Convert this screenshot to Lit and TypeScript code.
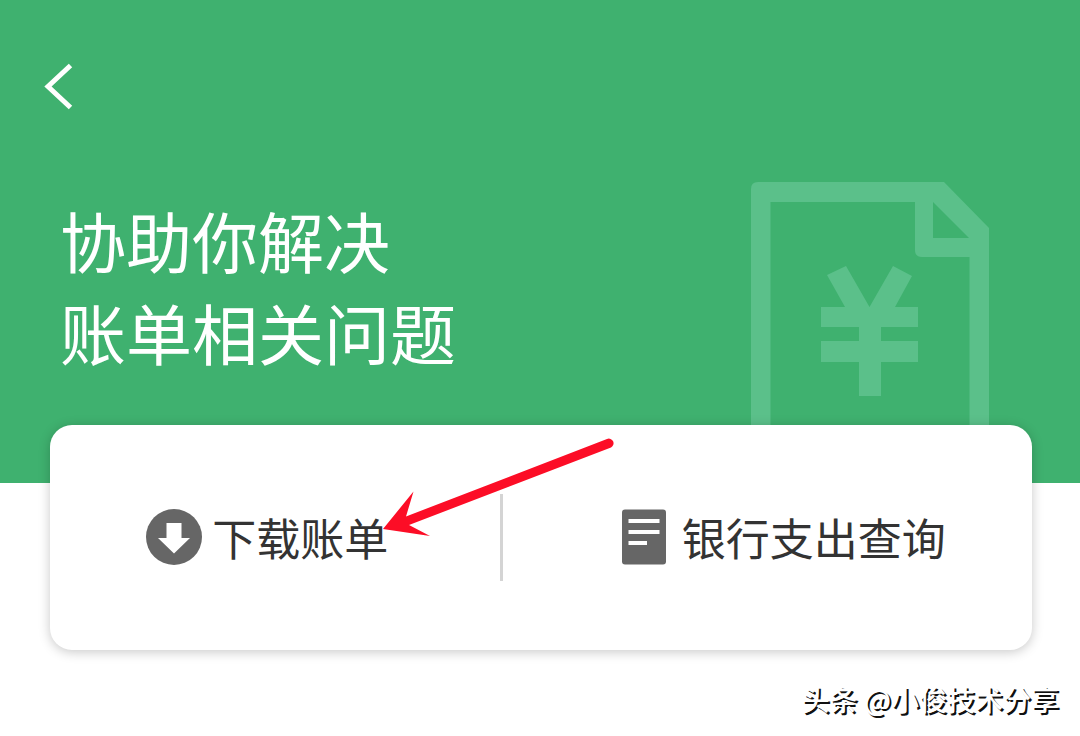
import { LitElement, html, css, svg } from "lit";
import { customElement } from "lit/decorators.js";

const downloadIcon = svg`
  <svg width="56" height="56" viewBox="0 0 56 56" aria-hidden="true">
    <circle cx="28" cy="28" r="28" fill="#666" />
    <path d="M20.500 14h15v15h8.500L28 44.500 12 29h8.500z" fill="#fff" />
  </svg>`;

const statementIcon = svg`
  <svg width="44" height="56" viewBox="0 0 44 56" aria-hidden="true">
    <rect width="44" height="55" y="0.500" rx="3" fill="#666" />
    <path d="M6.500 12h31M6.500 23h31M6.500 34h18.500" stroke="#fff" stroke-width="4" />
  </svg>`;

@customElement("app-root")
export class AppRoot extends LitElement {
  static styles = css`
    :host {
      display: block;
      position: relative;
      min-height: 100vh;
      background: #fff;
      color: #333;
      font-family: "Noto Sans CJK SC", sans-serif;
    }
    .hero {
      background: #3fb16f;
      color: #fff;
      padding: 62px 91px 0 60px;
    }
    .back {
      display: block;
      margin: 0 0 0 -18px;
      padding: 0;
      border: 0;
      background: none;
      color: inherit;
      height: 48px;
      width: 32px;
    }
    .back svg,
    .art,
    .action svg {
      display: block;
      flex: none;
    }
    .intro {
      display: flex;
      justify-content: space-between;
      align-items: flex-start;
      padding-top: 72px;
    }
    .title {
      margin: 0;
      padding-top: 11px;
      font-size: 66px;
      font-weight: 400;
      line-height: 92px;
    }
    .card {
      position: relative;
      display: grid;
      grid-template-columns: 23fr 3px 27fr;
      align-items: center;
      margin: -58px 48px 0 50px;
      padding: 69px 0;
      border-radius: 22px;
      background: #fff;
      box-shadow: 0 2px 12px rgba(0, 0, 0, 0.22);
    }
    .divider {
      height: 87px;
      background: #d4d4d4;
    }
    .action {
      display: flex;
      align-items: center;
      justify-content: center;
      gap: 10px;
      padding: 0 16px 2px 0;
      border: 0;
      background: none;
      color: inherit;
      font: inherit;
      font-size: 44px;
      line-height: 64px;
      white-space: nowrap;
    }
    .statement {
      gap: 16px;
      padding: 0 0 2px 32px;
    }
    .credit {
      margin: 0;
      padding: 29px 21px 0 0;
      text-align: right;
      font-size: 28px;
      font-weight: 500;
      line-height: 40px;
      color: #fff;
      text-shadow: 2px 2px 0 #111;
    }
    .pointer {
      position: absolute;
      left: 332px;
      top: 11px;
      pointer-events: none;
    }
  `;

  render() {
    return html`
      <header class="hero">
        <button class="back" type="button" aria-label="返回">
          <svg width="32" height="48" viewBox="0 0 32 48" fill="none" stroke="#fff" stroke-width="5">
            <path d="M28.500 3.500L6 24.500l22.500 21" />
          </svg>
        </button>
        <div class="intro">
          <h1 class="title">协助你解决<br />账单相关问题</h1>
          <svg class="art" width="238" height="301" viewBox="0 0 238 301" fill="#5bc08a" aria-hidden="true">
            <path
              fill-rule="evenodd"
              d="M7 0H193L238 46V301H218.500V75H171Q164 75 164 68V20H19.500V301H0V7Q0 0 7 0ZM182 20V56H218Z"
            />
            <path
              d="M76 93L95 84L118.500 125L142 84L161 94L144 125H167V145H130V159H167V180H130V214H108V180H70V159H108V145H70V125H94Z"
            />
          </svg>
        </div>
      </header>
      <main class="card">
        <button class="action" type="button">${downloadIcon}<span>下载账单</span></button>
        <span class="divider"></span>
        <button class="action statement" type="button">${statementIcon}<span>银行支出查询</span></button>
        <svg class="pointer" width="236" height="108" viewBox="382 436 236 108" fill="#fc0d26" aria-hidden="true">
          <path d="M383 529L413.500 491.500L406 516.500L607 439A4.700 4.700 0 0 1 611 447.500L409 525L430 536Z" />
        </svg>
      </main>
      <p class="credit">头条 @小俊技术分享</p>
    `;
  }
}
